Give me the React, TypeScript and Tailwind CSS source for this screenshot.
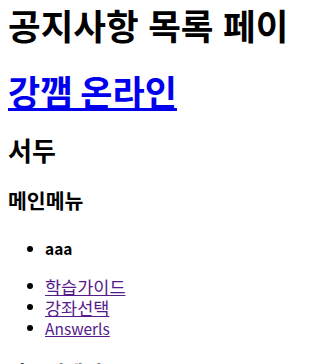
const menuLinks = [
    { label: "학습가이드", latin: false },
    { label: "강좌선택", latin: false },
    { label: "Answerls", latin: true },
];

function Bullet() {
    return <span className="ml-[19px] mr-[12px] h-[6px] w-[6px] shrink-0 rounded-full bg-black"></span>;
}

export default function App() {
    return (
        <div className="h-[364px] w-[285px] overflow-hidden bg-white px-2 pt-[7px] font-['Noto_Sans_CJK_KR',sans-serif] text-black">
            <h1 className="whitespace-nowrap text-[35.5px] font-bold leading-none [word-spacing:1.5px]">
                공지사항 목록 페이지
            </h1>
            <h1 className="mt-[30px] whitespace-nowrap text-[35px] font-bold leading-none">
                <a href="#" className="text-[#0000EE] underline">
                    강깸 온라인
                </a>
            </h1>
            <h2 className="mt-[29px] text-[26px] font-bold leading-none">서두</h2>
            <h3 className="mt-[27px] text-[20.5px] font-bold leading-none">메인메뉴</h3>

            {/* 메뉴 */}
            <ul className="mt-[31px]">
                <li className="flex items-center">
                    <Bullet />
                    <h4 className="text-[15.5px] font-bold leading-none">aaa</h4>
                </li>
            </ul>
            <ul className="mt-[19px] text-[17.5px] leading-[21px]">
                {menuLinks.map((item) => (
                    <li key={item.label} className="flex items-center">
                        <Bullet />
                        <a
                            href="#"
                            className={item.latin ? "text-[15.5px] text-[#551A8B] underline" : "text-[#551A8B] underline"}
                        >
                            {item.label}
                        </a>
                    </li>
                ))}
            </ul>
            <h3 className="mt-[23px] text-[20.5px] font-bold leading-none">파트너센터</h3>
        </div>
    );
}
